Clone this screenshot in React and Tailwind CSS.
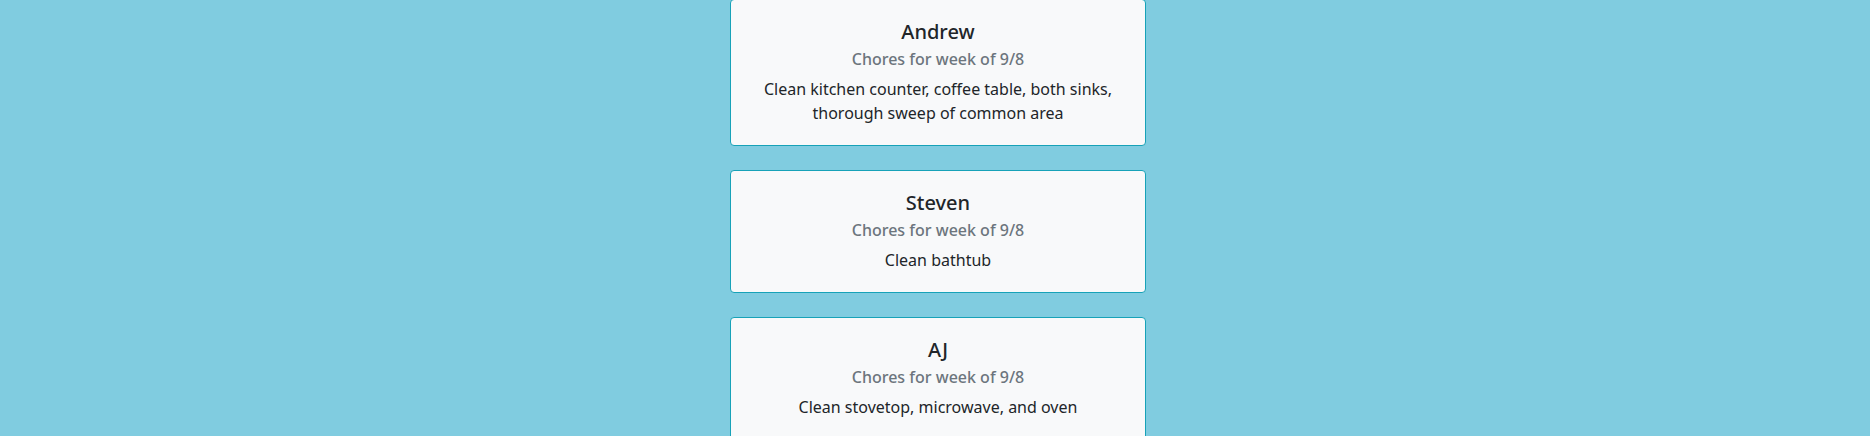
import React from 'react';

const chores = [
  { name: 'Andrew', task: 'Clean kitchen counter, coffee table, both sinks, thorough sweep of common area' },
  { name: 'Steven', task: 'Clean bathtub' },
  { name: 'AJ', task: 'Clean stovetop, microwave, and oven' },
];

const ChoreCard = ({ name, task }) => (
  <div className="w-[416px] mb-6 bg-[#f8f9fa] border border-[#17a2b8] rounded-[4px] text-center">
    <div className="px-5 pt-5 pb-5">
      <h5 className="text-[20px] leading-[24px] font-medium text-[#212529] mb-3">{name}</h5>
      <h6 className="text-[16px] leading-[19px] font-medium text-[#6c757d] -mt-[6px] mb-2">
        Chores for week of 9/8
      </h6>
      <p className="text-[16px] leading-[24px] text-[#212529]">{task}</p>
    </div>
  </div>
);

const App = () => {
  return (
    <div
      className="min-h-screen bg-[#80cce0] flex flex-col items-center pl-[6px] -mt-[1px]"
      style={{ fontFamily: '"Noto Sans", "Open Sans", sans-serif' }}
    >
      {chores.map((c) => (
        <ChoreCard key={c.name} name={c.name} task={c.task} />
      ))}
    </div>
  );
};

export default App;
